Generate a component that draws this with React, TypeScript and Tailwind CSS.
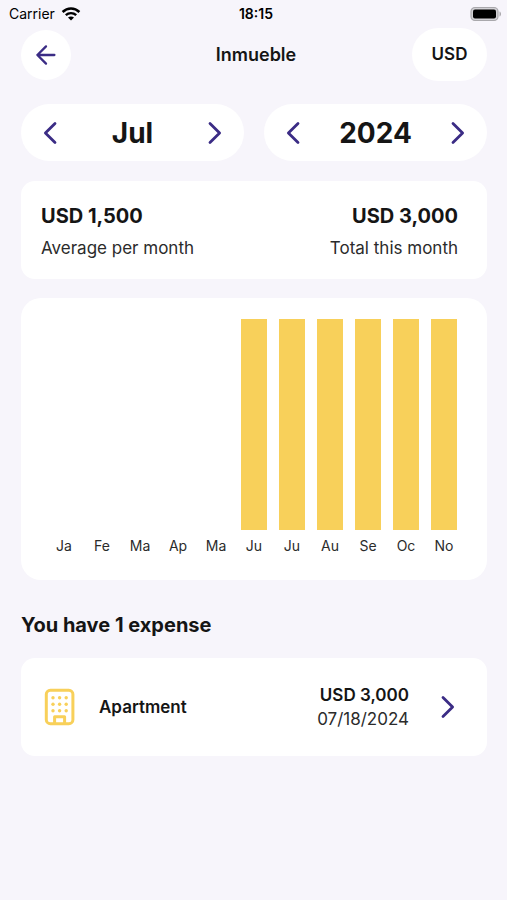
import type { ReactNode } from 'react';

interface MonthTotal {
  id: string;
  label: string;
  total: number;
}

interface Expense {
  id: number;
  name: string;
  amount: string;
  date: string;
}

const months: MonthTotal[] = [
  { id: 'jan', label: 'Ja', total: 0 },
  { id: 'feb', label: 'Fe', total: 0 },
  { id: 'mar', label: 'Ma', total: 0 },
  { id: 'apr', label: 'Ap', total: 0 },
  { id: 'may', label: 'Ma', total: 0 },
  { id: 'jun', label: 'Ju', total: 3000 },
  { id: 'jul', label: 'Ju', total: 3000 },
  { id: 'aug', label: 'Au', total: 3000 },
  { id: 'sep', label: 'Se', total: 3000 },
  { id: 'oct', label: 'Oc', total: 3000 },
  { id: 'nov', label: 'No', total: 3000 },
];

const expenses: Expense[] = [
  { id: 1, name: 'Apartment', amount: 'USD 3,000', date: '07/18/2024' },
];

function Chevron({ direction }: { direction: 'left' | 'right' }) {
  return (
    <svg
      width="14"
      height="24"
      viewBox="0 0 14 24"
      fill="none"
      stroke="currentColor"
      strokeWidth="2.8"
      strokeLinecap="round"
      strokeLinejoin="round"
      aria-hidden="true"
    >
      <path d={direction === 'left' ? 'M12 2.4L2.4 12l9.6 9.6' : 'M2 2.4l9.6 9.6L2 21.6'} />
    </svg>
  );
}

function StatusBar() {
  return (
    <div className="grid h-7 grid-cols-3 items-center pl-[9px] pr-1 text-black">
      <div className="flex items-center gap-[6px]">
        <span className="text-sm">Carrier</span>
        <svg width="20" height="14" viewBox="0 0 20 14" fill="none" stroke="currentColor" aria-hidden="true">
          <path d="M1.6 5C6.4.4 13.6.4 18.4 5" strokeWidth="2.5" />
          <path d="M4.8 8.2c3-2.8 7.4-2.8 10.4 0" strokeWidth="2.4" />
          <path d="M10 13.6L7 10.6c1.7-1.6 4.3-1.6 6 0z" fill="currentColor" stroke="none" />
        </svg>
      </div>
      <span className="text-center text-sm font-semibold">18:15</span>
      <svg className="justify-self-end" width="33" height="16" viewBox="0 0 33 16" aria-hidden="true">
        <rect x="1" y="1.5" width="27" height="13" rx="4" fill="#d2d1d5" stroke="#a9a8ac" strokeWidth="1.2" />
        <rect x="3" y="3.5" width="23" height="9" rx="2" fill="#000" />
        <path d="M29.5 5.5c2 .6 2 4.4 0 5z" fill="#a9a8ac" />
      </svg>
    </div>
  );
}

function Stepper({ name, children }: { name: string; children: ReactNode }) {
  return (
    <div className="flex h-[57px] flex-1 items-center justify-between rounded-full bg-white px-[11px]">
      <button type="button" aria-label={`Previous ${name}`} className="flex h-10 w-9 items-center justify-center text-[#3b2c85]">
        <Chevron direction="left" />
      </button>
      <span className="text-[28px] font-bold leading-9">{children}</span>
      <button type="button" aria-label={`Next ${name}`} className="flex h-10 w-9 items-center justify-center text-[#3b2c85]">
        <Chevron direction="right" />
      </button>
    </div>
  );
}

function MonthlyChart() {
  const max = Math.max(...months.map((m) => m.total));

  return (
    <section aria-label="Expenses by month" className="flex rounded-[20px] bg-white px-6 pb-6 pt-[21px]">
      {months.map((month) => (
        <div key={month.id} className="flex flex-1 flex-col">
          <div className="flex h-[211px] items-end px-[6px]">
            <div className="w-full bg-[#f8d05a]" style={{ height: `${(month.total / max) * 100}%` }} />
          </div>
          <span className="mt-[6px] text-center text-sm text-[#2b2b2b]">{month.label}</span>
        </div>
      ))}
    </section>
  );
}

function BuildingIcon() {
  return (
    <svg width="32" height="38" viewBox="0 0 32 38" fill="none" stroke="#f8d05a" strokeWidth="3" aria-hidden="true">
      <rect x="2.3" y="2.3" width="26.6" height="33.4" rx="4" />
      <path d="M10.6 35.5v-6.8h10v6.8" strokeLinejoin="round" />
      {[9.8, 16.3, 22.8].map((y) =>
        [9, 15.6, 22.2].map((x) => <circle key={`${x}-${y}`} cx={x} cy={y} r="1.7" fill="#f8d05a" stroke="none" />)
      )}
    </svg>
  );
}

export default function App() {
  return (
    <div className="min-h-screen bg-[#f7f5fb] font-['Inter',sans-serif] text-[#151515]">
      <StatusBar />

      <main className="pb-10 pl-[21px] pr-5">
        {/* Header */}
        <header className="grid grid-cols-[1fr_auto_1fr] items-center">
          <button type="button" aria-label="Back" className="flex h-[50px] w-[50px] items-center justify-center rounded-full bg-white text-[#3b2c85]">
            <svg
              width="22"
              height="22"
              viewBox="0 0 22 22"
              fill="none"
              stroke="currentColor"
              strokeWidth="2.3"
              strokeLinecap="round"
              strokeLinejoin="round"
              aria-hidden="true"
            >
              <path d="M19.4 11H2.4M11 2.4L2.4 11l8.6 8.6" />
            </svg>
          </button>
          <h1 className="pl-1 text-lg font-semibold">Inmueble</h1>
          <button type="button" className="h-[53px] w-[75px] justify-self-end rounded-full bg-white text-[17px] font-semibold">
            USD
          </button>
        </header>

        {/* Period */}
        <div className="mt-[23px] flex gap-5">
          <Stepper name="month">Jul</Stepper>
          <Stepper name="year">2024</Stepper>
        </div>

        {/* Summary */}
        <section className="mt-5 flex justify-between rounded-[14px] bg-white px-5 pb-[15px] pt-[19px] leading-8">
          <div>
            <p className="text-xl font-bold leading-8">USD 1,500</p>
            <p className="text-[17px] leading-8 text-[#2b2b2b]">Average per month</p>
          </div>
          <div className="pr-[9px] text-right">
            <p className="text-xl font-bold leading-8">USD 3,000</p>
            <p className="text-[17px] leading-8 text-[#2b2b2b]">Total this month</p>
          </div>
        </section>

        <div className="mt-[19px]">
          <MonthlyChart />
        </div>

        {/* Expenses */}
        <h2 className="mt-[29px] text-xl font-bold leading-8">You have {expenses.length} expense</h2>
        <ul className="mt-[17px] space-y-5">
          {expenses.map((expense) => (
            <li key={expense.id}>
              <button type="button" className="flex h-[98px] w-full items-center rounded-[14px] bg-white pl-[23px] pr-8 text-left">
                <BuildingIcon />
                <span className="ml-[23px] flex-1 text-[17px] font-semibold leading-6">{expense.name}</span>
                <span className="mr-8 text-right text-[17px] leading-6">
                  <span className="block font-semibold">{expense.amount}</span>
                  <span className="block text-[#2b2b2b]">{expense.date}</span>
                </span>
                <span className="text-[#3b2c85]">
                  <Chevron direction="right" />
                </span>
              </button>
            </li>
          ))}
        </ul>
      </main>
    </div>
  );
}
